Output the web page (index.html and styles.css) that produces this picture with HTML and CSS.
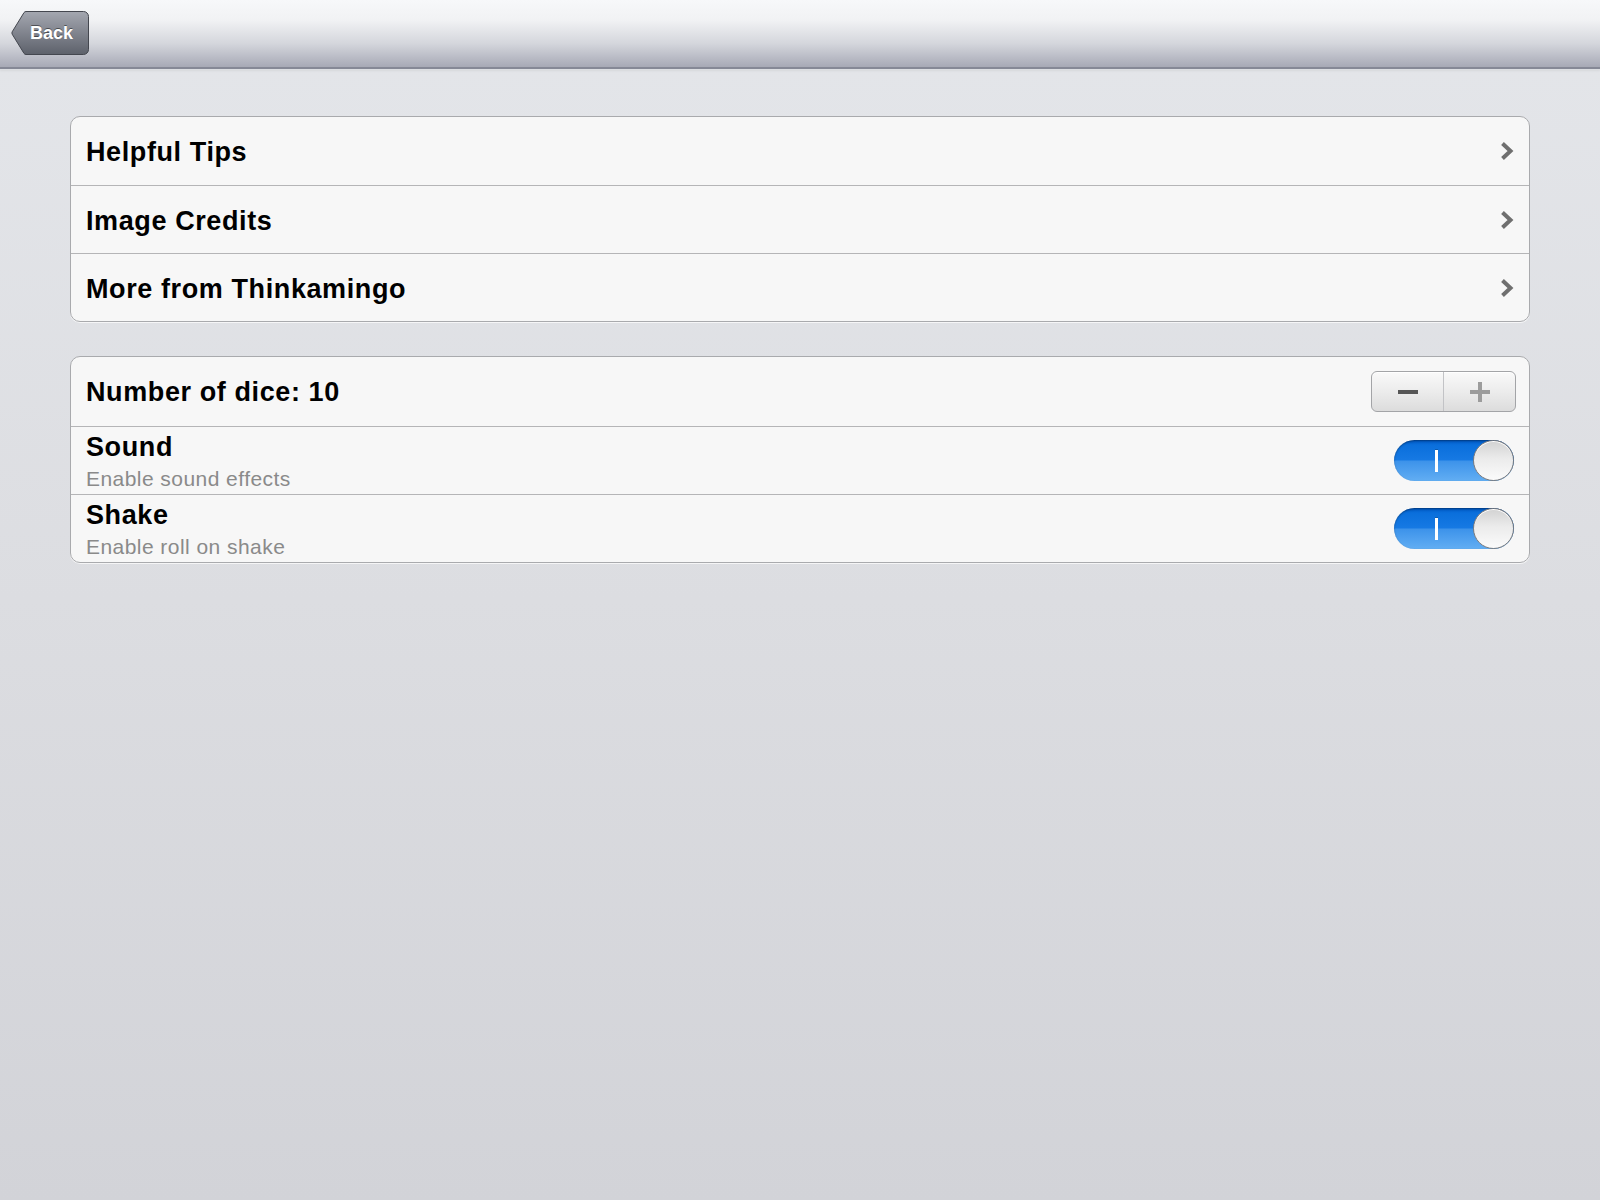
FILE: index.html
```html
<!DOCTYPE html>
<html lang="en">
<head>
  <meta charset="UTF-8" />
  <meta name="viewport" content="width=device-width, initial-scale=1.0"/>
  <title>Settings - Dice</title>
  <link rel="stylesheet" href="styles.css">
</head>
<body>

  <header class="navbar">
    <a href="#" class="back-button">Back</a>
  </header>

  <main class="settings-page">

    <!-- info links -->
    <div class="table-group">
      <a href="#" class="table-row link-row">
        <span class="row-title">Helpful Tips</span>
        <svg class="chevron" width="14" height="20" viewBox="0 0 14 20"><polyline points="2.5,2.5 10.5,10 2.5,17.5" /></svg>
      </a>
      <a href="#" class="table-row link-row">
        <span class="row-title">Image Credits</span>
        <svg class="chevron" width="14" height="20" viewBox="0 0 14 20"><polyline points="2.5,2.5 10.5,10 2.5,17.5" /></svg>
      </a>
      <a href="#" class="table-row link-row">
        <span class="row-title">More from Thinkamingo</span>
        <svg class="chevron" width="14" height="20" viewBox="0 0 14 20"><polyline points="2.5,2.5 10.5,10 2.5,17.5" /></svg>
      </a>
    </div>

    <!-- game options -->
    <div class="table-group">
      <div class="table-row first-row">
        <span class="row-title">Number of dice: 10</span>
        <div class="stepper">
          <button class="stepper-btn minus" aria-label="Decrease"><span></span></button>
          <button class="stepper-btn plus" aria-label="Increase"><span></span></button>
        </div>
      </div>
      <div class="table-row">
        <div class="row-text">
          <span class="row-title">Sound</span>
          <span class="row-subtitle">Enable sound effects</span>
        </div>
        <div class="toggle on"><span class="toggle-mark"></span><span class="toggle-knob"></span></div>
      </div>
      <div class="table-row">
        <div class="row-text">
          <span class="row-title">Shake</span>
          <span class="row-subtitle">Enable roll on shake</span>
        </div>
        <div class="toggle on"><span class="toggle-mark"></span><span class="toggle-knob"></span></div>
      </div>
    </div>

  </main>

</body>
</html>
```

FILE: styles.css
```css
:root {
  --row-bg: #f7f7f7;
  --row-line: #b5b5b7;
  --group-border: #a9aaad;
  --text-color: #000;
  --sub-text: #8a8a8a;
  --chevron: #6f6f6f;
}

* {
  box-sizing: border-box;
  margin: 0;
  padding: 0;
}

html, body {
  height: 100%;
}

body {
  font-family: "Liberation Sans", Arial, sans-serif;
  background: linear-gradient(to bottom, #e4e6ea 0%, #dcdde1 50%, #d2d3d8 100%);
  color: var(--text-color);
}

/* top bar */
.navbar {
  height: 69px;
  padding: 11px 0 0 11px;
  background: linear-gradient(to bottom, #f7f8fa 0%, #f1f2f4 30%, #d4d6dc 65%, #a7a9b6 100%);
  border-bottom: 2px solid #858896;
  box-shadow: 0 1px 0 #dcdee2, 0 2px 2px rgba(0, 0, 0, 0.06);
}

.back-button {
  display: block;
  width: 78px;
  height: 44px;
  padding-left: 19px;
  line-height: 45px;
  font-size: 18px;
  font-weight: bold;
  color: #fff;
  text-decoration: none;
  text-shadow: 0 -1px 0 rgba(0, 0, 0, 0.45);
  background: url("data:image/svg+xml,%3Csvg xmlns='http://www.w3.org/2000/svg' width='78' height='44' viewBox='0 0 78 44'%3E%3Cdefs%3E%3ClinearGradient id='g' x1='0' y1='0' x2='0' y2='1'%3E%3Cstop offset='0' stop-color='%23a4a7b0'/%3E%3Cstop offset='1' stop-color='%235d616b'/%3E%3C/linearGradient%3E%3C/defs%3E%3Cpath d='M15 0.5 H72.5 A5 5 0 0 1 77.5 5.5 V38.5 A5 5 0 0 1 72.5 43.5 H15 Q13.8 43.5 13 42.4 L1.2 23.2 Q0.6 22 1.2 20.8 L13 1.6 Q13.8 0.5 15 0.5 Z' fill='url(%23g)' stroke='%2344474f' stroke-width='1'/%3E%3C/svg%3E") no-repeat;
}

/* grouped tables */
.settings-page {
  padding: 47px 70px 0;
}

.table-group {
  background: var(--row-bg);
  border: 1px solid var(--group-border);
  border-radius: 10px;
  box-shadow: 0 1px 0 rgba(255, 255, 255, 0.7);
  overflow: hidden;
}

.table-group + .table-group {
  margin-top: 34px;
}

.table-row {
  display: flex;
  align-items: center;
  justify-content: space-between;
  height: 68px;
  padding: 0 15px;
  color: var(--text-color);
  text-decoration: none;
  border-top: 1px solid var(--row-line);
}

.table-row:first-child {
  border-top: none;
}

.link-row .row-title {
  padding-top: 3px;
}

.table-row.first-row {
  height: 69px;
  padding-right: 13px;
}

.first-row .row-title {
  padding-top: 2px;
}

.row-title {
  font-size: 27px;
  font-weight: bold;
  line-height: 29px;
  letter-spacing: 0.6px;
}

.row-text {
  display: flex;
  flex-direction: column;
  align-self: flex-start;
  padding-top: 6px;
}

.row-text .row-title {
  padding-top: 0;
}

.row-subtitle {
  margin-top: 5px;
  font-size: 21px;
  line-height: 24px;
  letter-spacing: 0.45px;
  color: var(--sub-text);
}

.chevron polyline {
  fill: none;
  stroke: var(--chevron);
  stroke-width: 4;
  stroke-linecap: butt;
  stroke-linejoin: miter;
}

/* stepper */
.stepper {
  display: flex;
  width: 145px;
  height: 41px;
  border: 1px solid #a3a4a7;
  border-radius: 6px;
  background: linear-gradient(to bottom, #f9f9f9 0%, #ececec 50%, #dcdcdc 100%);
  box-shadow: inset 0 1px 0 #fff;
  overflow: hidden;
}

.stepper-btn {
  flex: 1;
  display: flex;
  align-items: center;
  justify-content: center;
  border: none;
  background: transparent;
  cursor: pointer;
}

.stepper-btn.minus {
  border-right: 1px solid #c2c3c6;
}

.stepper-btn.minus span {
  width: 20px;
  height: 4px;
  background: #565656;
}

.stepper-btn.plus span {
  width: 20px;
  height: 20px;
  background:
    linear-gradient(#9c9c9c, #9c9c9c) center / 20px 4px no-repeat,
    linear-gradient(#9c9c9c, #9c9c9c) center / 4px 20px no-repeat;
}

/* switch */
.toggle {
  display: flex;
  align-items: center;
  justify-content: space-between;
  width: 120px;
  height: 41px;
  padding-left: 41px;
  border-radius: 21px;
  background: linear-gradient(to bottom, #0056c0 0%, #0a6fdc 12%, #1679e3 48%, #3d93ea 52%, #62aef3 100%);
  box-shadow: inset 0 1px 2px rgba(0, 0, 0, 0.35);
}

.toggle-mark {
  width: 3px;
  height: 22px;
  background: #fff;
  box-shadow: 0 -1px 0 rgba(0, 0, 0, 0.2);
}

.toggle-knob {
  width: 41px;
  height: 41px;
  border-radius: 50%;
  border: 1px solid #7c7c7e;
  background: linear-gradient(to bottom, #d2d2d2 0%, #ebebeb 45%, #fbfbfb 100%);
  box-shadow: inset 0 1px 0 #fff;
}
```
